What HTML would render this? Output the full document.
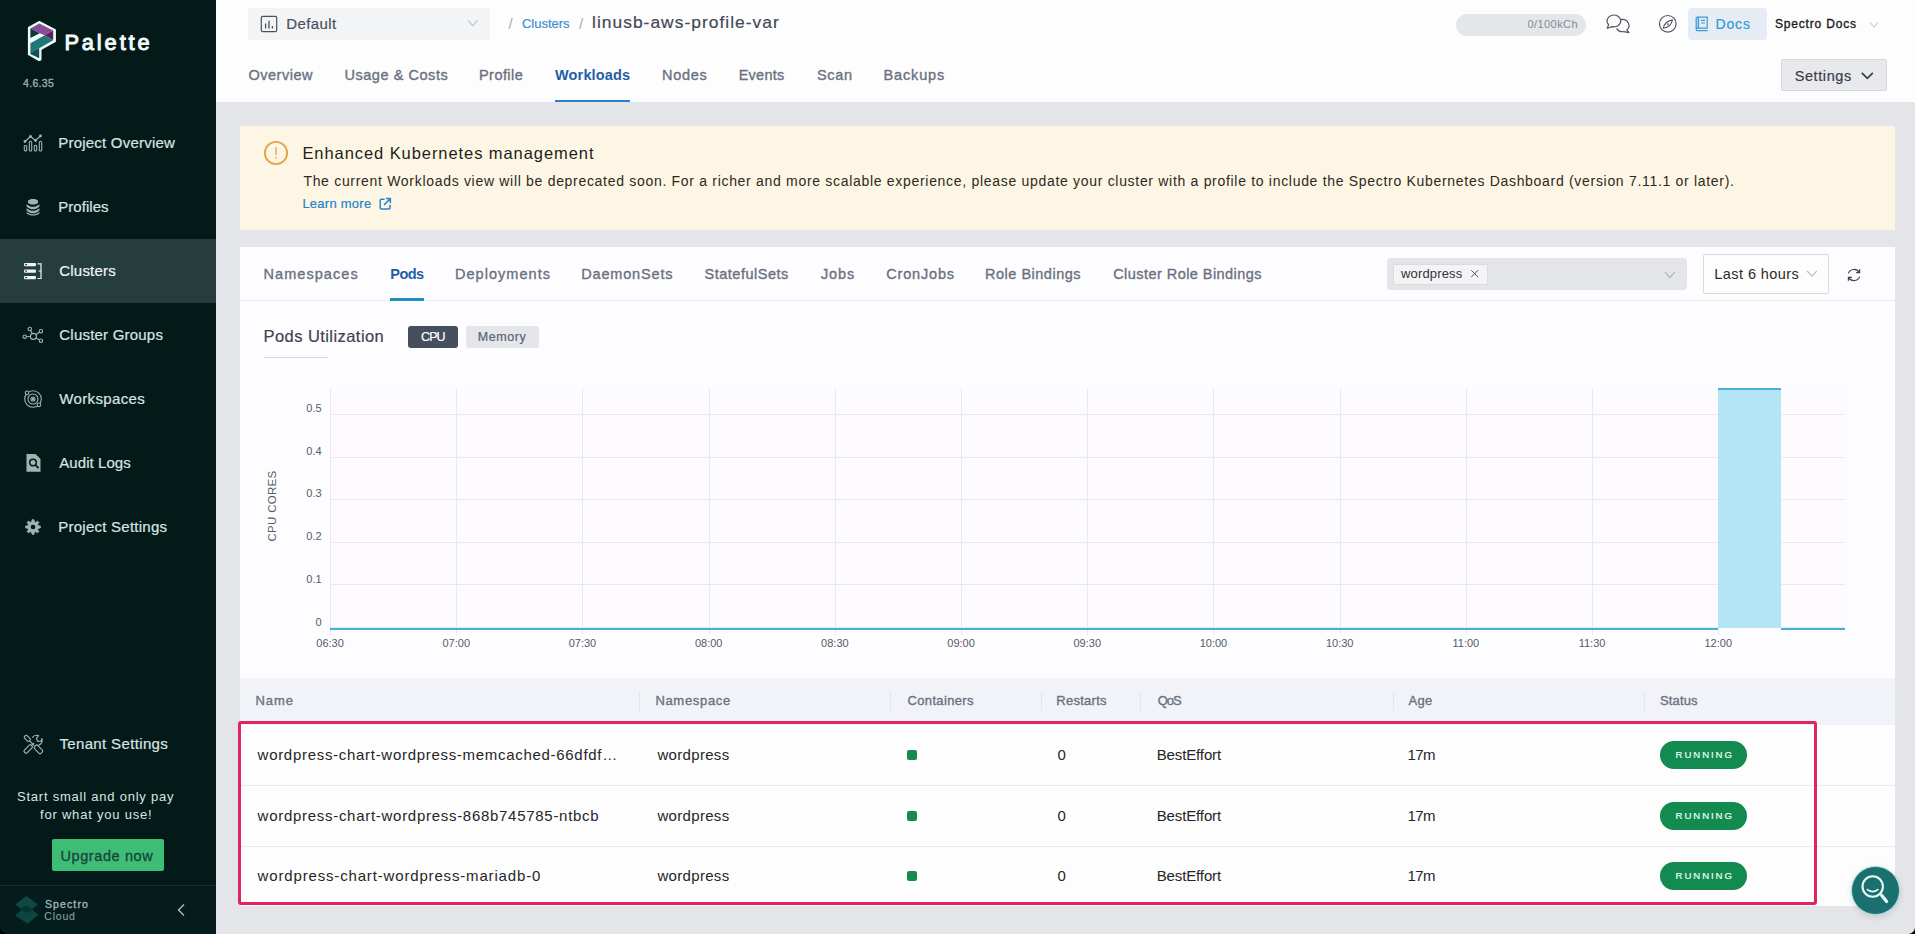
<!DOCTYPE html>
<html><head><meta charset="utf-8">
<style>
html,body{margin:0;padding:0;}
body{width:1915px;height:934px;overflow:hidden;position:relative;background:#e3e5e9;font-family:"Liberation Sans",sans-serif;}
.a{position:absolute;box-sizing:border-box;}
.t{position:absolute;white-space:nowrap;line-height:1;font-family:"Liberation Sans",sans-serif;}
svg{position:absolute;overflow:visible;}
</style></head><body>
<div class="a" style="left:0px;top:0px;width:216px;height:934px;background:#031a19;"></div>
<div class="a" style="left:0px;top:239px;width:216px;height:64px;background:#263d3d;"></div>
<div class="a" style="left:0px;top:886px;width:216px;height:48px;background:#041d1c;"></div>
<div class="a" style="left:0px;top:885px;width:216px;height:1px;background:#173131;"></div>
<div class="a" style="left:52px;top:839px;width:112px;height:32px;background:#3ebd77;border-radius:2px;"></div>
<div class="a" style="left:216px;top:0px;width:1699px;height:102px;background:#fdfdfe;"></div>
<div class="a" style="left:248px;top:8px;width:242px;height:32px;background:#f3f4f6;"></div>
<div class="a" style="left:555px;top:99.6px;width:75px;height:2.4000000000000057px;background:#2b7fcf;"></div>
<div class="a" style="left:1456px;top:13.5px;width:130px;height:22.5px;background:#e4e6ea;border-radius:11px;"></div>
<div class="a" style="left:1688px;top:8px;width:79px;height:32px;background:#e6ecf4;border-radius:4px;"></div>
<div class="a" style="left:1781px;top:59px;width:106px;height:32px;background:#e8e9ec;border:1px solid #d6d8dc;border-radius:2px;"></div>
<div class="a" style="left:240px;top:126px;width:1655px;height:104px;background:#fef6e5;"></div>
<div class="a" style="left:240px;top:247px;width:1655px;height:659px;background:#fdfdff;"></div>
<div class="a" style="left:240px;top:725px;width:1655px;height:181px;background:#fdfdfe;"></div>
<div class="a" style="left:240px;top:300px;width:1655px;height:1px;background:#e8eaee;"></div>
<div class="a" style="left:390px;top:298px;width:34px;height:3px;background:#1e8ec4;"></div>
<div class="a" style="left:1387px;top:258px;width:300px;height:32px;background:#e4e5e8;border-radius:4px;"></div>
<div class="a" style="left:1392.5px;top:263.5px;width:95.0px;height:21.0px;background:#f4f4f6;border:1px solid #dcdce0;border-radius:2px;"></div>
<div class="a" style="left:1703px;top:254px;width:126px;height:39.5px;background:#fdfdfd;border:1px solid #d9d9dc;border-radius:2px;"></div>
<div class="a" style="left:264px;top:356.5px;width:64px;height:1.0px;background:#d5d8de;"></div>
<div class="a" style="left:408px;top:326px;width:50px;height:21.80000000000001px;background:#454f5d;border-radius:3px;"></div>
<div class="a" style="left:466px;top:326px;width:73px;height:21.80000000000001px;background:#e4e6ea;border-radius:3px;"></div>
<div class="a" style="left:240px;top:678px;width:1655px;height:47px;background:#f2f3f8;"></div>
<div class="a" style="left:639.3px;top:692px;width:1.0px;height:19px;background:#e3e5e9;"></div>
<div class="a" style="left:890.3px;top:692px;width:1.0px;height:19px;background:#e3e5e9;"></div>
<div class="a" style="left:1040.5px;top:692px;width:1.0px;height:19px;background:#e3e5e9;"></div>
<div class="a" style="left:1140px;top:692px;width:1px;height:19px;background:#e3e5e9;"></div>
<div class="a" style="left:1392.7px;top:692px;width:1.0px;height:19px;background:#e3e5e9;"></div>
<div class="a" style="left:1643.6px;top:692px;width:1.0px;height:19px;background:#e3e5e9;"></div>
<div class="a" style="left:240px;top:785px;width:1655px;height:1px;background:#ebecef;"></div>
<div class="a" style="left:240px;top:846px;width:1655px;height:1px;background:#ebecef;"></div>
<div class="a" style="left:906.8px;top:750.2px;width:10.200000000000045px;height:10.199999999999932px;background:#178a52;border-radius:2px;"></div>
<div class="a" style="left:1660px;top:741.2px;width:87px;height:28.0px;background:#138a4f;border-radius:14px;"></div>
<div class="a" style="left:906.8px;top:811.2px;width:10.200000000000045px;height:10.199999999999932px;background:#178a52;border-radius:2px;"></div>
<div class="a" style="left:1660px;top:802.2px;width:87px;height:28.0px;background:#138a4f;border-radius:14px;"></div>
<div class="a" style="left:906.8px;top:871.2px;width:10.200000000000045px;height:10.199999999999932px;background:#178a52;border-radius:2px;"></div>
<div class="a" style="left:1660px;top:862.2px;width:87px;height:28.0px;background:#138a4f;border-radius:14px;"></div>
<div class="a" style="left:237.5px;top:721px;width:1579.5px;height:184px;background:transparent;border:3px solid #e0245e;border-radius:3px;"></div>
<div class="a" style="left:1850.5px;top:865.5px;width:49.0px;height:49.0px;background:#19706f;border-radius:50%;border:1px solid #a9e3e3;box-shadow:0 2px 6px rgba(0,0,0,0.12);"></div>
<div class="a" style="left:331px;top:388px;width:1514px;height:239px;background:#fdfbfd;"></div>
<div class="a" style="left:330px;top:414px;width:1515px;height:1px;background:#e9e9ed;"></div>
<div class="a" style="left:330px;top:457px;width:1515px;height:1px;background:#e9e9ed;"></div>
<div class="a" style="left:330px;top:499px;width:1515px;height:1px;background:#e9e9ed;"></div>
<div class="a" style="left:330px;top:542px;width:1515px;height:1px;background:#e9e9ed;"></div>
<div class="a" style="left:330px;top:584px;width:1515px;height:1px;background:#e9e9ed;"></div>
<div class="a" style="left:330px;top:627px;width:1515px;height:1px;background:#e9e9ed;"></div>
<div class="a" style="left:330px;top:388px;width:1px;height:247px;background:#e9e9ed;"></div>
<div class="a" style="left:456px;top:388px;width:1px;height:247px;background:#e9e9ed;"></div>
<div class="a" style="left:582px;top:388px;width:1px;height:247px;background:#e9e9ed;"></div>
<div class="a" style="left:709px;top:388px;width:1px;height:247px;background:#e9e9ed;"></div>
<div class="a" style="left:835px;top:388px;width:1px;height:247px;background:#e9e9ed;"></div>
<div class="a" style="left:961px;top:388px;width:1px;height:247px;background:#e9e9ed;"></div>
<div class="a" style="left:1087px;top:388px;width:1px;height:247px;background:#e9e9ed;"></div>
<div class="a" style="left:1213px;top:388px;width:1px;height:247px;background:#e9e9ed;"></div>
<div class="a" style="left:1340px;top:388px;width:1px;height:247px;background:#e9e9ed;"></div>
<div class="a" style="left:1466px;top:388px;width:1px;height:247px;background:#e9e9ed;"></div>
<div class="a" style="left:1592px;top:388px;width:1px;height:247px;background:#e9e9ed;"></div>
<div class="a" style="left:1718px;top:388px;width:1px;height:247px;background:#e9e9ed;"></div>
<div class="a" style="left:1718px;top:389px;width:63px;height:239px;background:#b3e5f5;"></div>
<div class="a" style="left:1718px;top:387.5px;width:63px;height:2.0px;background:#48b2d2;"></div>
<div class="a" style="left:330px;top:627.5px;width:1388px;height:2.0px;background:#48b2d2;"></div>
<div class="a" style="left:1781px;top:627.5px;width:64px;height:2.0px;background:#48b2d2;"></div>
<div class="t" style="left:273px;top:506px;font-size:11.5px;color:#555b66;transform:translate(-50%,-50%) rotate(-90deg);letter-spacing:0.3px;">CPU CORES</div>
<svg style="left:26px;top:19px" width="32" height="45" viewBox="0 0 32 45"><g transform="translate(-26,-19)"><polygon points="39.3,21.6 55.3,29.9 55.3,41.5 40.9,49.6 40.9,59.8 38.8,60.4 28.5,54.6 28.5,27.6" fill="#eefafa" stroke="#eefafa" stroke-width="1.2" stroke-linejoin="round"/><polygon points="30.4,28.4 39.3,23.5 53.2,30.5 44.7,35.2 39.8,33.2" fill="#8a4b96"/><polygon points="30.4,28.6 39.8,33.3 30.4,37.9" fill="#0c393a"/><polygon points="44.7,35.2 53.2,30.5 53.2,40.3" fill="#5a1f5f"/><polygon points="30.4,43.2 44.7,35.2 53.2,40.3 39.2,48.2 30.4,52.6" fill="#1e7877"/><polygon points="30.4,52.6 39.2,48.2 39.2,58.3 30.4,53.9" fill="#10504f"/></g></svg>
<svg style="left:23px;top:134px" width="20" height="18" viewBox="0 0 20 18"><g fill="none" stroke="#9fb5b2" stroke-width="1.1"><rect x="1.3" y="11.5" width="2.4" height="5.5" rx="1"/><rect x="6.3" y="7.3" width="2.4" height="9.7" rx="1"/><rect x="11.3" y="11.2" width="2.4" height="5.8" rx="1"/><rect x="16.3" y="7.3" width="2.4" height="9.7" rx="1"/><polyline points="2,7.5 7.5,2.5 12.5,6.5 17.5,2"/></g><g fill="#9fb5b2"><circle cx="2" cy="7.5" r="1.4"/><circle cx="7.5" cy="2.5" r="1.4"/><circle cx="12.5" cy="6.5" r="1.4"/><circle cx="17.5" cy="2" r="1.4"/></g></svg>
<svg style="left:25px;top:198px" width="16" height="18" viewBox="0 0 16 18"><g fill="#9fb5b2"><polygon points="3,2.5 6,1 10,1 13,2.5 13,5 10,6.5 6,6.5 3,5"/><path d="M1.5,6.2 L3,7.2 6,8.7 10,8.7 13,7.2 14.5,6.2 14.5,8.2 13,9.8 10,11.2 6,11.2 3,9.8 1.5,8.2Z"/><path d="M1.5,10.2 L3,11.2 6,12.7 10,12.7 13,11.2 14.5,10.2 14.5,12.2 13,13.8 10,15.2 6,15.2 3,13.8 1.5,12.2Z"/><path d="M1.5,14 L3,15 6,16.3 10,16.3 13,15 14.5,14 14.5,15.2 13,16.5 10,17.5 6,17.5 3,16.5 1.5,15.2Z"/></g></svg>
<svg style="left:23px;top:262px" width="20" height="18" viewBox="0 0 20 18"><g fill="#eef4f4"><rect x="1" y="1" width="12" height="3.2" rx="1"/><rect x="1" y="7.5" width="12" height="3.2" rx="1"/><rect x="1" y="14" width="12" height="3.2" rx="1"/></g><g fill="#263d3d"><rect x="2.2" y="2" width="1.8" height="1.2"/><rect x="2.2" y="8.5" width="1.8" height="1.2"/><rect x="2.2" y="15" width="1.8" height="1.2"/></g><path d="M14.5,1.8 H18 V16.5 H14.5 M15.5,9 H18" fill="none" stroke="#eef4f4" stroke-width="1.2"/></svg>
<svg style="left:22px;top:326px" width="22" height="18" viewBox="0 0 22 18"><g fill="none" stroke="#9fb5b2" stroke-width="1.1"><circle cx="11.4" cy="10.4" r="3"/><circle cx="7.8" cy="3" r="1.7"/><circle cx="18.9" cy="5.2" r="1.7"/><circle cx="18.9" cy="14.7" r="1.7"/><circle cx="2.7" cy="10.7" r="1.7"/><path d="M8.6,4.5 L10.2,7.6 M17.4,6 L13.9,8.8 M17.4,13.7 L13.9,11.9 M4.4,10.7 L8.4,10.5"/></g></svg>
<svg style="left:23px;top:389px" width="20" height="20" viewBox="0 0 20 20"><g fill="none" stroke="#9fb5b2" stroke-width="1.1"><circle cx="10" cy="10" r="8.3"/><circle cx="10" cy="10" r="5"/><circle cx="10" cy="10" r="2"/></g><circle cx="10" cy="10" r="1.2" fill="#9fb5b2"/><circle cx="4" cy="3.8" r="1.8" fill="#041a1a" stroke="#9fb5b2" stroke-width="1.1"/><circle cx="16" cy="15.8" r="1.8" fill="#041a1a" stroke="#9fb5b2" stroke-width="1.1"/></svg>
<svg style="left:25px;top:453px" width="17" height="20" viewBox="0 0 17 20"><path d="M1.5,1 H10.5 L15.5,6 V18.7 H1.5 Z" fill="#9fb5b2"/><circle cx="8" cy="9.5" r="3.3" fill="none" stroke="#041a1a" stroke-width="1.6"/><path d="M10.3,11.9 L13.6,15.2" stroke="#041a1a" stroke-width="1.8"/></svg>
<svg style="left:24.8px;top:518.8px" width="16" height="16" viewBox="0 0 16 16"><polygon points="13.14,6.72 15.33,6.97 15.33,9.03 13.14,9.28 12.54,10.73 13.91,12.45 12.45,13.91 10.73,12.54 9.28,13.14 9.03,15.33 6.97,15.33 6.72,13.14 5.27,12.54 3.55,13.91 2.09,12.45 3.46,10.73 2.86,9.28 0.67,9.03 0.67,6.97 2.86,6.72 3.46,5.27 2.09,3.55 3.55,2.09 5.27,3.46 6.72,2.86 6.97,0.67 9.03,0.67 9.28,2.86 10.73,3.46 12.45,2.09 13.91,3.55 12.54,5.27" fill="#9fb5b2" stroke="#9fb5b2" stroke-width="0.8" stroke-linejoin="round"/><circle cx="8" cy="8" r="5.3" fill="#9fb5b2"/><circle cx="8" cy="8" r="2.3" fill="#031a19"/></svg>
<svg style="left:18px;top:728px" width="30" height="30" viewBox="0 0 30 30"><g fill="none" stroke="#9fb5b2" stroke-width="1.15" stroke-linejoin="round"><rect x="-1.8" y="-3.4" width="3.6" height="6.8" rx="1.6" transform="translate(9.3,10.4) rotate(-45)"/><path d="M11.6,12.9 L16.3,17.6"/><rect x="-2.3" y="-4.6" width="4.6" height="9.2" rx="1.3" transform="translate(20.4,21.4) rotate(-45)"/><rect x="-1.9" y="-4.8" width="3.8" height="9.6" rx="1.3" transform="translate(10.2,21) rotate(45)"/><path d="M13.4,17.6 L16.2,14.9 M14.2,9.6 C15.6,7.6 18.4,6.9 20.6,7.6 L18.4,10.4 L19.8,13.4 L22.9,13.1 L23.9,10.6 C24.8,13.4 23.4,16.2 21.2,16.9 L19.8,17.9"/></g></svg>
<svg style="left:14px;top:895px" width="26" height="30" viewBox="0 0 26 30"><g transform="translate(-14,-895)"><polygon points="26.5,905.5 38.6,914.8 27.5,923.8 15.3,915.4" fill="#0c4541"/><polygon points="26.3,896 38,904.6 26.5,913 15.3,904.6" fill="#0d4843"/><polygon points="18.5,909 26.5,905.5 34,910 26.5,913" fill="#063431"/></g></svg>
<svg style="left:176px;top:903px" width="10" height="14" viewBox="0 0 10 14"><polyline points="8,1.5 2.5,7 8,12.5" fill="none" stroke="#a7bdba" stroke-width="1.4"/></svg>
<svg style="left:260px;top:15px" width="18" height="18" viewBox="0 0 18 18"><rect x="1.3" y="1.3" width="15.4" height="15.4" rx="1.5" fill="none" stroke="#4a505c" stroke-width="1.2"/><path d="M5.6,8.6 V13.6 M9,5.8 V13.6 M12.4,11 V13.6" stroke="#4a505c" stroke-width="1.3"/></svg>
<svg style="left:467px;top:19px" width="12" height="9" viewBox="0 0 12 9"><polyline points="1,1.5 5.8,6.8 10.6,1.5" fill="none" stroke="#b5b9c0" stroke-width="1.1"/></svg>
<svg style="left:1600px;top:8px" width="40" height="32" viewBox="0 0 40 32"><path d="M12.1,18.6 A6.9,5.9 0 1 0 8.6,16.7 L7.2,20.3 Z" fill="none" stroke="#50555f" stroke-width="1.15" stroke-linejoin="round"/><path d="M20.9,11.6 A6.6,6.2 0 0 1 26.8,22.2 L29,24.6 L23.7,23.6 A6.6,6.2 0 0 1 16.6,20.4" fill="none" stroke="#50555f" stroke-width="1.15" stroke-linejoin="round"/></svg>
<svg style="left:1658px;top:14px" width="20" height="20" viewBox="0 0 20 20"><circle cx="9.8" cy="9.8" r="8.3" fill="none" stroke="#50555f" stroke-width="1.2"/><path d="M5.4,14.3 Q6.4,7.4 14.4,5.9 Q13.4,12.8 5.4,14.3 Z" fill="none" stroke="#50555f" stroke-width="1.1" stroke-linejoin="round"/><circle cx="9.9" cy="10.1" r="0.9" fill="#50555f"/></svg>
<svg style="left:1695px;top:16px" width="14" height="16" viewBox="0 0 14 16"><path d="M1.5,1.2 H3.6 V12.2 H1.5 Z" fill="#9fd0f0"/><path d="M1.2,13.8 V2.2 C1.2,1.6 1.6,1.2 2.2,1.2 H12.2 V12.2 H2.4 C1.8,12.2 1.2,12.7 1.2,13.4 C1.2,14.1 1.8,14.6 2.4,14.6 H12.6" fill="none" stroke="#3b9ad8" stroke-width="1.2"/><path d="M3.6,1.5 V12 M6,4.4 H10 M6,7 H10" stroke="#3b9ad8" stroke-width="1.1"/></svg>
<svg style="left:1869px;top:21px" width="11" height="8" viewBox="0 0 11 8"><polyline points="1,1.5 5,5.8 9,1.5" fill="none" stroke="#c4c7cd" stroke-width="1.1"/></svg>
<svg style="left:1860px;top:71px" width="15" height="10" viewBox="0 0 15 10"><polyline points="1.8,1.8 7.3,7.3 12.8,1.8" fill="none" stroke="#383d48" stroke-width="1.7"/></svg>
<svg style="left:263px;top:140px" width="26" height="26" viewBox="0 0 26 26"><circle cx="13" cy="13" r="11.1" fill="none" stroke="#e4a447" stroke-width="1.9"/><path d="M13,7.6 V14.4" stroke="#dfa55a" stroke-width="1.4" stroke-linecap="round"/><circle cx="13" cy="17.6" r="0.9" fill="#dfa55a"/></svg>
<svg style="left:378px;top:197px" width="14" height="14" viewBox="0 0 14 14"><path d="M6,2.3 H3.2 Q2.2,2.3 2.2,3.3 V11 Q2.2,12 3.2,12 H11 Q12,12 12,11 V8.2" fill="none" stroke="#2a86cc" stroke-width="1.5" stroke-linecap="round"/><path d="M8.4,1.6 H12.4 V5.6 M12.2,1.8 L6.4,7.6" fill="none" stroke="#2a86cc" stroke-width="1.5" stroke-linecap="round" stroke-linejoin="round"/></svg>
<svg style="left:1470px;top:269px" width="10" height="10" viewBox="0 0 10 10"><path d="M1.2,1.2 L8.2,8.2 M8.2,1.2 L1.2,8.2" stroke="#555" stroke-width="1"/></svg>
<svg style="left:1664px;top:270px" width="12" height="10" viewBox="0 0 12 10"><polyline points="1,2 5.9,7.5 10.8,2" fill="none" stroke="#a6a9b0" stroke-width="1.1"/></svg>
<svg style="left:1806px;top:269px" width="12" height="10" viewBox="0 0 12 10"><polyline points="1,2 5.9,7.2 10.8,2" fill="none" stroke="#b9bcc2" stroke-width="1.1"/></svg>
<svg style="left:1846px;top:267px" width="16" height="16" viewBox="0 0 16 16"><path d="M2.4,6.4 A6,6 0 0 1 13.2,5.4 M13.6,9.6 A6,6 0 0 1 2.8,10.6" fill="none" stroke="#3d434e" stroke-width="1.2"/><path d="M13.6,2.2 V5.6 H10.2" fill="none" stroke="#3d434e" stroke-width="1.2"/><path d="M2.4,13.8 V10.4 H5.8" fill="none" stroke="#3d434e" stroke-width="1.2"/></svg>
<svg style="left:1858px;top:873px" width="34" height="34" viewBox="0 0 34 34"><circle cx="14.7" cy="13.5" r="10.2" fill="none" stroke="#e8fbfb" stroke-width="2.1"/><path d="M9.4,16.6 Q14.6,20.6 19.8,16.6" fill="none" stroke="#e8fbfb" stroke-width="1.6" stroke-linecap="round"/><path d="M23.6,22.2 L28.6,28.6" stroke="#e8fbfb" stroke-width="3.2" stroke-linecap="round"/></svg>
<svg style="left:0px;top:926px" width="8" height="8" viewBox="0 0 8 8"><path d="M0,0 L0,8 L8,8 A8,8 0 0 1 0,0 Z" fill="#000"/></svg>
<svg style="left:1908px;top:927px" width="7" height="7" viewBox="0 0 7 7"><path d="M7,0 L7,7 L0,7 A7,7 0 0 0 7,0 Z" fill="#000"/></svg>
<div class="t" style="left:64.40px;top:32.14px;font-size:21.8px;color:#f2fafa;letter-spacing:2.910px;-webkit-text-stroke:1px currentColor;">Palette</div>
<div class="t" style="left:23.00px;top:78.11px;font-size:10.5px;color:#9eaeae;letter-spacing:0.329px;-webkit-text-stroke:0.35px currentColor;">4.6.35</div>
<div class="t" style="left:58.30px;top:134.70px;font-size:15px;color:#d8e5e3;letter-spacing:0.211px;-webkit-text-stroke:0.2px currentColor;">Project Overview</div>
<div class="t" style="left:58.30px;top:198.70px;font-size:15px;color:#d8e5e3;letter-spacing:0.026px;-webkit-text-stroke:0.2px currentColor;">Profiles</div>
<div class="t" style="left:59.30px;top:262.70px;font-size:15px;color:#eef5f4;letter-spacing:0.198px;-webkit-text-stroke:0.2px currentColor;">Clusters</div>
<div class="t" style="left:59.30px;top:326.70px;font-size:15px;color:#d8e5e3;letter-spacing:0.210px;-webkit-text-stroke:0.2px currentColor;">Cluster Groups</div>
<div class="t" style="left:59.30px;top:390.70px;font-size:15px;color:#d8e5e3;letter-spacing:0.350px;-webkit-text-stroke:0.2px currentColor;">Workspaces</div>
<div class="t" style="left:59.30px;top:454.70px;font-size:15px;color:#d8e5e3;letter-spacing:0.057px;-webkit-text-stroke:0.2px currentColor;">Audit Logs</div>
<div class="t" style="left:58.30px;top:518.70px;font-size:15px;color:#d8e5e3;letter-spacing:0.243px;-webkit-text-stroke:0.2px currentColor;">Project Settings</div>
<div class="t" style="left:59.40px;top:736.30px;font-size:15px;color:#d8e5e3;letter-spacing:0.357px;-webkit-text-stroke:0.2px currentColor;">Tenant Settings</div>
<div class="t" style="left:17.00px;top:790.19px;font-size:13px;color:#d8e5e3;letter-spacing:0.772px;">Start small and only pay</div>
<div class="t" style="left:40.00px;top:807.99px;font-size:13px;color:#d8e5e3;letter-spacing:0.788px;">for what you use!</div>
<div class="t" style="left:60.40px;top:848.52px;font-size:14.5px;color:#18483a;letter-spacing:0.612px;-webkit-text-stroke:0.35px currentColor;">Upgrade now</div>
<div class="t" style="left:45.00px;top:899.31px;font-size:10.5px;color:#9fb6b3;letter-spacing:1.109px;-webkit-text-stroke:0.35px currentColor;">Spectro</div>
<div class="t" style="left:44.30px;top:910.81px;font-size:10.5px;color:#93aaa7;letter-spacing:0.801px;">Cloud</div>
<div class="t" style="left:286.30px;top:16.10px;font-size:15px;color:#4a505c;letter-spacing:0.390px;-webkit-text-stroke:0.2px currentColor;">Default</div>
<div class="t" style="left:508.60px;top:16.30px;font-size:15px;color:#a8abb2;">/</div>
<div class="t" style="left:522.00px;top:16.99px;font-size:13px;color:#3d8fd1;letter-spacing:-0.025px;-webkit-text-stroke:0.2px currentColor;">Clusters</div>
<div class="t" style="left:579.00px;top:16.30px;font-size:15px;color:#a8abb2;">/</div>
<div class="t" style="left:592.00px;top:14.27px;font-size:17.4px;color:#434955;letter-spacing:1.025px;-webkit-text-stroke:0.2px currentColor;">linusb-aws-profile-var</div>
<div class="t" style="left:248.40px;top:67.72px;font-size:14.5px;color:#6b717e;letter-spacing:0.520px;-webkit-text-stroke:0.35px currentColor;">Overview</div>
<div class="t" style="left:344.40px;top:67.72px;font-size:14.5px;color:#6b717e;letter-spacing:0.554px;-webkit-text-stroke:0.35px currentColor;">Usage &amp; Costs</div>
<div class="t" style="left:479.00px;top:67.72px;font-size:14.5px;color:#6b717e;letter-spacing:0.444px;-webkit-text-stroke:0.35px currentColor;">Profile</div>
<div class="t" style="left:555.00px;top:67.72px;font-size:14.5px;color:#1f5ea7;font-weight:700;letter-spacing:0.151px;">Workloads</div>
<div class="t" style="left:662.00px;top:67.72px;font-size:14.5px;color:#6b717e;letter-spacing:0.709px;-webkit-text-stroke:0.35px currentColor;">Nodes</div>
<div class="t" style="left:738.70px;top:67.72px;font-size:14.5px;color:#6b717e;letter-spacing:0.244px;-webkit-text-stroke:0.35px currentColor;">Events</div>
<div class="t" style="left:817.00px;top:67.72px;font-size:14.5px;color:#6b717e;letter-spacing:0.671px;-webkit-text-stroke:0.35px currentColor;">Scan</div>
<div class="t" style="left:883.60px;top:67.72px;font-size:14.5px;color:#6b717e;letter-spacing:0.839px;-webkit-text-stroke:0.35px currentColor;">Backups</div>
<div class="t" style="left:1527.60px;top:18.69px;font-size:11px;color:#858a95;letter-spacing:0.404px;">0/100kCh</div>
<div class="t" style="left:1715.40px;top:17.15px;font-size:14px;color:#2f9ad8;letter-spacing:0.901px;-webkit-text-stroke:0.2px currentColor;">Docs</div>
<div class="t" style="left:1775.00px;top:18.04px;font-size:12px;color:#1b1b1b;letter-spacing:0.816px;-webkit-text-stroke:0.35px currentColor;">Spectro Docs</div>
<div class="t" style="left:1794.70px;top:68.72px;font-size:14.5px;color:#383d48;letter-spacing:0.594px;-webkit-text-stroke:0.2px currentColor;">Settings</div>
<div class="t" style="left:302.40px;top:145.03px;font-size:16.5px;color:#221e19;letter-spacing:0.928px;">Enhanced Kubernetes management</div>
<div class="t" style="left:303.40px;top:174.15px;font-size:14px;color:#2d2923;letter-spacing:0.695px;">The current Workloads view will be deprecated soon. For a richer and more scalable experience, please update your cluster with a profile to include the Spectro Kubernetes Dashboard (version 7.11.1 or later).</div>
<div class="t" style="left:302.40px;top:196.99px;font-size:13px;color:#2882c8;letter-spacing:0.250px;-webkit-text-stroke:0.2px currentColor;">Learn more</div>
<div class="t" style="left:263.50px;top:266.72px;font-size:14.5px;color:#6b717e;letter-spacing:1.059px;-webkit-text-stroke:0.35px currentColor;">Namespaces</div>
<div class="t" style="left:390.30px;top:266.72px;font-size:14.5px;color:#1f5ea7;font-weight:700;letter-spacing:-0.562px;">Pods</div>
<div class="t" style="left:455.00px;top:266.72px;font-size:14.5px;color:#6b717e;letter-spacing:1.033px;-webkit-text-stroke:0.35px currentColor;">Deployments</div>
<div class="t" style="left:581.20px;top:266.72px;font-size:14.5px;color:#6b717e;letter-spacing:0.837px;-webkit-text-stroke:0.35px currentColor;">DaemonSets</div>
<div class="t" style="left:704.50px;top:266.72px;font-size:14.5px;color:#6b717e;letter-spacing:0.506px;-webkit-text-stroke:0.35px currentColor;">StatefulSets</div>
<div class="t" style="left:821.00px;top:266.72px;font-size:14.5px;color:#6b717e;letter-spacing:0.874px;-webkit-text-stroke:0.35px currentColor;">Jobs</div>
<div class="t" style="left:886.20px;top:266.72px;font-size:14.5px;color:#6b717e;letter-spacing:0.828px;-webkit-text-stroke:0.35px currentColor;">CronJobs</div>
<div class="t" style="left:985.00px;top:266.72px;font-size:14.5px;color:#6b717e;letter-spacing:0.507px;-webkit-text-stroke:0.35px currentColor;">Role Bindings</div>
<div class="t" style="left:1113.20px;top:266.72px;font-size:14.5px;color:#6b717e;letter-spacing:0.446px;-webkit-text-stroke:0.35px currentColor;">Cluster Role Bindings</div>
<div class="t" style="left:1401.00px;top:266.99px;font-size:13px;color:#333;letter-spacing:0.154px;">wordpress</div>
<div class="t" style="left:1714.30px;top:266.72px;font-size:14.5px;color:#2b2b2b;letter-spacing:0.432px;">Last 6 hours</div>
<div class="t" style="left:263.50px;top:328.03px;font-size:16.5px;color:#3d4350;letter-spacing:0.437px;-webkit-text-stroke:0.2px currentColor;">Pods Utilization</div>
<div class="t" style="left:421.00px;top:330.62px;font-size:12.5px;color:#fff;letter-spacing:-0.882px;-webkit-text-stroke:0.2px currentColor;">CPU</div>
<div class="t" style="left:477.70px;top:331.02px;font-size:12.5px;color:#5a6272;letter-spacing:0.602px;-webkit-text-stroke:0.2px currentColor;">Memory</div>
<div class="t" style="left:255.60px;top:694.29px;font-size:13px;color:#6b717e;letter-spacing:0.884px;-webkit-text-stroke:0.35px currentColor;">Name</div>
<div class="t" style="left:655.40px;top:694.29px;font-size:13px;color:#6b717e;letter-spacing:0.683px;-webkit-text-stroke:0.35px currentColor;">Namespace</div>
<div class="t" style="left:907.60px;top:694.29px;font-size:13px;color:#6b717e;letter-spacing:0.326px;-webkit-text-stroke:0.35px currentColor;">Containers</div>
<div class="t" style="left:1056.30px;top:694.29px;font-size:13px;color:#6b717e;letter-spacing:0.257px;-webkit-text-stroke:0.35px currentColor;">Restarts</div>
<div class="t" style="left:1157.70px;top:694.29px;font-size:13px;color:#6b717e;letter-spacing:-1.021px;-webkit-text-stroke:0.35px currentColor;">QoS</div>
<div class="t" style="left:1408.50px;top:694.29px;font-size:13px;color:#6b717e;letter-spacing:0.300px;-webkit-text-stroke:0.35px currentColor;">Age</div>
<div class="t" style="left:1660.00px;top:694.29px;font-size:13px;color:#6b717e;letter-spacing:0.129px;-webkit-text-stroke:0.35px currentColor;">Status</div>
<div class="t" style="left:257.60px;top:747.30px;font-size:15px;color:#262626;letter-spacing:0.702px;">wordpress-chart-wordpress-memcached-66dfdf…</div>
<div class="t" style="left:657.40px;top:747.30px;font-size:15px;color:#262626;letter-spacing:0.326px;">wordpress</div>
<div class="t" style="left:1057.40px;top:747.30px;font-size:15px;color:#262626;">0</div>
<div class="t" style="left:1156.70px;top:747.30px;font-size:15px;color:#262626;letter-spacing:-0.125px;">BestEffort</div>
<div class="t" style="left:1407.50px;top:747.30px;font-size:15px;color:#262626;letter-spacing:-0.592px;">17m</div>
<div class="t" style="left:1675.50px;top:750.27px;font-size:9.6px;color:#effff5;letter-spacing:1.949px;-webkit-text-stroke:0.2px currentColor;">RUNNING</div>
<div class="t" style="left:257.60px;top:808.30px;font-size:15px;color:#262626;letter-spacing:0.713px;">wordpress-chart-wordpress-868b745785-ntbcb</div>
<div class="t" style="left:657.40px;top:808.30px;font-size:15px;color:#262626;letter-spacing:0.326px;">wordpress</div>
<div class="t" style="left:1057.40px;top:808.30px;font-size:15px;color:#262626;">0</div>
<div class="t" style="left:1156.70px;top:808.30px;font-size:15px;color:#262626;letter-spacing:-0.125px;">BestEffort</div>
<div class="t" style="left:1407.50px;top:808.30px;font-size:15px;color:#262626;letter-spacing:-0.592px;">17m</div>
<div class="t" style="left:1675.50px;top:811.27px;font-size:9.6px;color:#effff5;letter-spacing:1.949px;-webkit-text-stroke:0.2px currentColor;">RUNNING</div>
<div class="t" style="left:257.60px;top:868.30px;font-size:15px;color:#262626;letter-spacing:0.838px;">wordpress-chart-wordpress-mariadb-0</div>
<div class="t" style="left:657.40px;top:868.30px;font-size:15px;color:#262626;letter-spacing:0.326px;">wordpress</div>
<div class="t" style="left:1057.40px;top:868.30px;font-size:15px;color:#262626;">0</div>
<div class="t" style="left:1156.70px;top:868.30px;font-size:15px;color:#262626;letter-spacing:-0.125px;">BestEffort</div>
<div class="t" style="left:1407.50px;top:868.30px;font-size:15px;color:#262626;letter-spacing:-0.592px;">17m</div>
<div class="t" style="left:1675.50px;top:871.27px;font-size:9.6px;color:#effff5;letter-spacing:1.949px;-webkit-text-stroke:0.2px currentColor;">RUNNING</div>
<div class="t" style="left:306.33px;top:402.89px;font-size:11px;color:#555b66;">0.5</div>
<div class="t" style="left:306.33px;top:445.69px;font-size:11px;color:#555b66;">0.4</div>
<div class="t" style="left:306.33px;top:488.49px;font-size:11px;color:#555b66;">0.3</div>
<div class="t" style="left:306.33px;top:531.29px;font-size:11px;color:#555b66;">0.2</div>
<div class="t" style="left:306.33px;top:574.09px;font-size:11px;color:#555b66;">0.1</div>
<div class="t" style="left:315.50px;top:616.89px;font-size:11px;color:#555b66;">0</div>
<div class="t" style="left:316.30px;top:638.29px;font-size:11px;color:#555b66;">06:30</div>
<div class="t" style="left:442.50px;top:638.29px;font-size:11px;color:#555b66;">07:00</div>
<div class="t" style="left:568.70px;top:638.29px;font-size:11px;color:#555b66;">07:30</div>
<div class="t" style="left:694.90px;top:638.29px;font-size:11px;color:#555b66;">08:00</div>
<div class="t" style="left:821.10px;top:638.29px;font-size:11px;color:#555b66;">08:30</div>
<div class="t" style="left:947.30px;top:638.29px;font-size:11px;color:#555b66;">09:00</div>
<div class="t" style="left:1073.50px;top:638.29px;font-size:11px;color:#555b66;">09:30</div>
<div class="t" style="left:1199.70px;top:638.29px;font-size:11px;color:#555b66;">10:00</div>
<div class="t" style="left:1325.90px;top:638.29px;font-size:11px;color:#555b66;">10:30</div>
<div class="t" style="left:1452.50px;top:638.29px;font-size:11px;color:#555b66;">11:00</div>
<div class="t" style="left:1578.70px;top:638.29px;font-size:11px;color:#555b66;">11:30</div>
<div class="t" style="left:1704.50px;top:638.29px;font-size:11px;color:#555b66;">12:00</div>
</body></html>
